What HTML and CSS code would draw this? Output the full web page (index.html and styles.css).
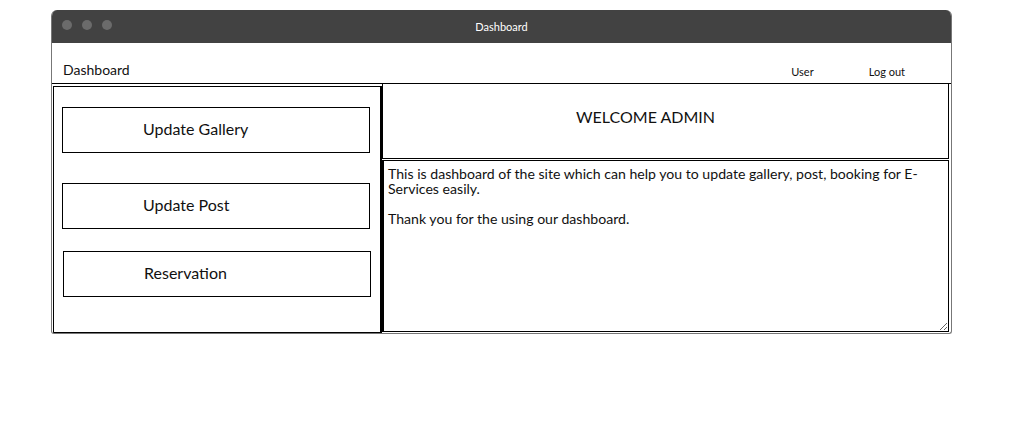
FILE: index.html
```html
<!DOCTYPE html>
<html>
<head>
<meta charset="utf-8">
<link rel="stylesheet" href="styles.css">
</head>
<body>
<div class="window">
  <div class="titlebar">
    <div class="dots"><span class="dot"></span><span class="dot"></span><span class="dot"></span></div>
    <div class="title">Dashboard</div>
  </div>
  <div class="nav">
    <div class="brand">Dashboard</div>
    <div class="links"><span class="link user">User</span><span class="link">Log out</span></div>
  </div>
  <div class="main">
    <div class="side">
      <div class="btn b1">Update Gallery</div>
      <div class="btn b2">Update Post</div>
      <div class="btn b3">Reservation</div>
    </div>
    <div class="content">
      <div class="welcome">WELCOME ADMIN</div>
      <textarea class="info" readonly>This is dashboard of the site which can help you to update gallery, post, booking for E-Services easily.

Thank you for the using our dashboard.</textarea>
    </div>
  </div>
</div>
</body>
</html>
```
FILE: styles.css
```css
* { box-sizing: border-box; }
body {
  margin: 0;
  padding-top: 10px;
  background: #fff;
  font-family: Lato, "Open Sans", sans-serif;
  color: #111;
}
.window {
  margin-left: 51px;
  width: 901px;
  height: 324px;
  border: 1px solid #777;
  border-top: none;
  border-radius: 6px 6px 3px 3px;
  overflow: hidden;
}
.titlebar {
  height: 33px;
  background: #424242;
  position: relative;
  display: flex;
  align-items: center;
  justify-content: center;
}
.dots {
  position: absolute;
  left: 10px;
  top: 10px;
  display: flex;
  gap: 10px;
}
.dot {
  width: 10px;
  height: 10px;
  border-radius: 50%;
  background: #6b6b6b;
}
.title {
  color: #fff;
  font-size: 11px;
}
.nav {
  height: 41px;
  border-bottom: 1px solid #000;
  display: flex;
  justify-content: space-between;
  align-items: flex-end;
  padding: 0 0 5px 11px;
}
.brand { font-size: 14px; }
.links { font-size: 11px; padding-right: 46px; }
.link.user { margin-right: 55px; }
.main {
  display: flex;
  height: 249px;
}
.side {
  margin: 2px 0 0 1px;
  width: 329px;
  height: 247px;
  border: 1px solid #000;
  border-right-width: 2px;
  padding: 20px 0 0 8px;
}
.btn {
  width: 308px;
  height: 46px;
  border: 1px solid #000;
  font-size: 16px;
  display: flex;
  align-items: center;
  padding: 0 0 4px 80px;
}
.b2 { margin-top: 30px; }
.b3 { margin-top: 22px; margin-left: 1px; }
.content {
  width: 567px;
  display: flex;
  flex-direction: column;
}
.welcome {
  height: 75px;
  border: 1px solid #000;
  border-top: none;
  display: flex;
  align-items: center;
  justify-content: center;
  font-size: 16px;
  padding: 0 40px 10px 0;
}
.info {
  margin-top: 1px;
  height: 172px;
  width: 567px;
  border: 1px solid #000;
  border-left-width: 2px;
  border-radius: 0;
  font-family: Lato, "Open Sans", sans-serif;
  font-size: 14.1px;
  line-height: 15px;
  padding: 5px 4px 3px 4px;
  resize: both;
  color: #111;
  outline: none;
  display: block;
}
```
